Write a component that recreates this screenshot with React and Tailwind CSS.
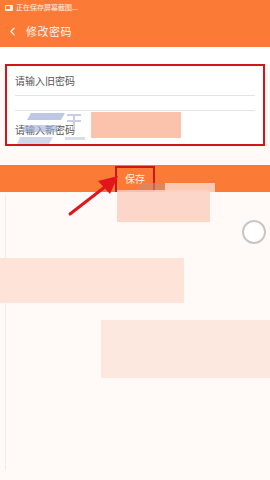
import { ChevronLeft } from 'lucide-react'

const FONT = { fontFamily: '"Noto Sans CJK SC", "Noto Sans", sans-serif' }

export default function App() {
  return (
    <div className="relative w-[270px] h-[480px] overflow-hidden bg-[#fffaf7]" style={FONT}>
      {/* status bar */}
      <div className="h-[15px] bg-[#fb7a36] flex items-center gap-[3px] px-[5px]">
        <span className="w-[8px] h-[6px] bg-white/90 rounded-[1px] flex items-start p-[1px]">
          <span className="w-[4px] h-[3px] bg-[#fb7a36]" />
        </span>
        <span className="text-[7px] leading-none text-white/90">正在保存屏幕截图...</span>
      </div>

      {/* header */}
      <div className="h-[32px] bg-[#fb7a36] flex items-center pl-[6px]">
        <ChevronLeft className="w-[13px] h-[13px] text-white/90" strokeWidth={2.2} />
        <span className="ml-[7px] text-[11px] text-white/95 tracking-[0.5px]">修改密码</span>
      </div>

      <div className="h-[17px] bg-white" />

      {/* form */}
      <div className="mx-[5px] h-[82px] border-[2px] border-[#d2151c] bg-white flex flex-col">
        <div className="h-[29px] flex items-center pl-[8px] text-[10px] text-[#555]">请输入旧密码</div>
        <div className="mx-[8px] h-px bg-[#e6e2e0]" />
        <div className="h-[14px]" />
        <div className="mx-[8px] h-px bg-[#e6e2e0]" />
        <div className="flex-1 flex items-center pl-[8px] pt-[4px] text-[10px] text-[#555]">请输入新密码</div>
      </div>

      <div className="h-[19px]" />

      {/* save bar */}
      <div className="h-[27px] bg-[#fb7a36] flex items-center justify-center">
        <div className="w-[40px] h-[26px] border-[2px] border-[#d2151c] flex items-center justify-center text-[10px] text-white/95">
          保存
        </div>
      </div>

      {/* faint left line */}
      <div className="absolute left-[5px] top-[195px] w-px h-[275px] bg-[#f3ece8]" />

      {/* watermark */}
      <svg className="absolute left-[17px] top-[111px] pointer-events-none" width="72" height="36" viewBox="0 0 72 36">
        <polygon points="14,2 48,2 44,9 10,9" fill="#9fb0d8" fillOpacity="0.7" />
        <polygon points="8,14 42,14 38,21 4,21" fill="#9fb0d8" fillOpacity="0.6" />
        <polygon points="3,26 36,26 32,33 0,33" fill="#9fb0d8" fillOpacity="0.5" />
        <rect x="50" y="3" width="14" height="2" fill="#c8cfe4" />
        <rect x="50" y="9" width="14" height="2" fill="#c8cfe4" />
        <rect x="56" y="3" width="2" height="16" fill="#c8cfe4" />
        <rect x="48" y="26" width="20" height="3" fill="#c8cfe4" fillOpacity="0.7" />
      </svg>

      {/* redaction blocks */}
      <div className="absolute left-[91px] top-[112px] w-[90px] h-[26px] bg-[#fcb99d]/85" />
      <div className="absolute left-[140px] top-[183px] w-[26px] h-[7px] bg-[#c98c78]/60" />
      <div className="absolute left-[117px] top-[190px] w-[93px] h-[32px] bg-[#fcd2c2]/90" />
      <div className="absolute left-[165px] top-[183px] w-[50px] h-[9px] bg-[#fcd2c2]/90" />
      <div className="absolute left-0 top-[258px] w-[184px] h-[45px] bg-[#fde3d8]" />
      <div className="absolute left-[101px] top-[320px] w-[169px] h-[58px] bg-[#fde8df]" />

      {/* radio circle */}
      <div className="absolute left-[242px] top-[220px] w-[24px] h-[24px] rounded-full border-[2px] border-[#c9c6c4] bg-white" />

      {/* red arrow */}
      <svg className="absolute left-[66px] top-[172px]" width="56" height="46" viewBox="0 0 56 46">
        <line x1="4" y1="42" x2="44" y2="11" stroke="#e0161c" strokeWidth="3" strokeLinecap="round" />
        <polygon points="52,4 32,9 44,22" fill="#e0161c" />
      </svg>
    </div>
  )
}
